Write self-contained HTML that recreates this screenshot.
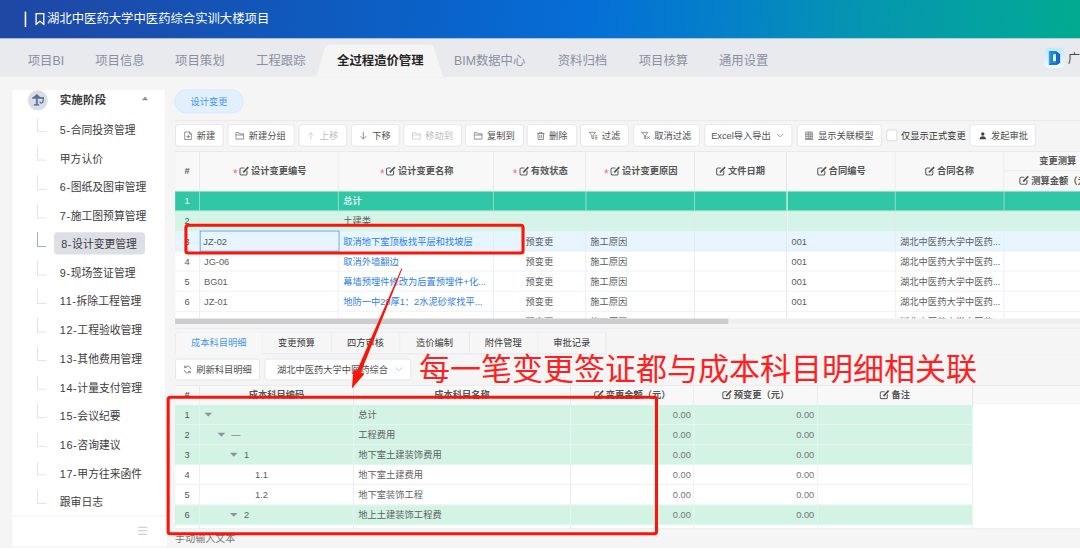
<!DOCTYPE html>
<html lang="zh-CN"><head><meta charset="utf-8"><title>设计变更管理</title>
<style>
*{box-sizing:border-box;margin:0;padding:0}
html,body{width:1080px;height:548px;overflow:hidden;background:#f5f5f5}
body{font-family:"Liberation Sans", "Noto Sans CJK SC", sans-serif;font-size:12px;color:#333;position:relative}
#root{position:absolute;left:0;top:0;width:1400px;height:711px;transform:scale(0.771429);transform-origin:0 0;overflow:hidden;background:#f5f5f5}
.abs{position:absolute}
#hdr{left:0;top:0;width:1400px;height:50.4px;background:linear-gradient(95deg,#1f47a4 0%,#1a4eae 12%,#1157ba 25%,#0a62c8 40%,#056ed7 54%,#0480c9 67%,#0596b0 80%,#03a59b 94%,#02aa90 100%)}
#hdr .bar{left:31.5px;top:15px;width:2.4px;height:20px;background:#fff}
#hdr .ttl{left:61px;top:13px;height:24px;line-height:24px;font-size:16px;color:#fff;white-space:nowrap}
#nav{left:0;top:50px;width:1400px;height:50.2px;background:#e9eaee}
.ni{top:16.5px;height:24px;line-height:24px;font-size:16px;color:#8b90a0;white-space:nowrap}
.ni.on{color:#262626;font-weight:bold}
#side{left:16px;top:117.2px;width:198px;height:551.3px;background:#fff;border-radius:0 0 4px 4px}
#sideb{left:15.6px;top:670.3px;width:200.4px;height:37.9px;background:#fff;border-radius:1px}
.si{left:69.5px;height:28.5px;line-height:28.5px;font-size:14px;color:#3c3c3c;white-space:nowrap;padding:0 8px;border-radius:4px}
.si.on{padding-left:9.8px}
.tl{left:32px;width:12px;border-left:1.3px solid #dcdcdc;border-bottom:1.3px solid #dcdcdc}
.tl.on{border-color:#8a96b3}
.btn{height:29px;line-height:28.2px;border:1px solid #dfe1e5;border-radius:4px;background:#fff;font-size:12px;color:#505050;white-space:nowrap;text-align:center;top:161px}
.btn.dis{color:#bcbcbc}
.btn svg{vertical-align:-2px;margin-right:5px}
.t1h{top:195.5px;height:52px;background:#f8f8f8;border-right:1px solid #dfe2e8;border-bottom:1px solid #e6e6e6;border-top:1px solid #e6e6e6;font-weight:bold;color:#555;text-align:center;line-height:50.6px;white-space:nowrap;overflow:hidden}
.c{height:26px;line-height:27.6px;border-right:1px solid #e2e5ea;border-bottom:1px solid #e6e8ec;white-space:nowrap;overflow:hidden;padding:0 5.5px;color:#5e5e5e}
.c.lnk{color:#2f80e6}
.c.ctr{text-align:center}
.c.num{text-align:right;color:#777;padding-right:3.5px}
.c.idx{text-align:center;padding:0;color:#555}
.req{color:#f56c6c;font-weight:normal;font-size:15.5px;margin:0 1.8px 0 2px;display:inline-block;line-height:12px;vertical-align:-5px;font-family:'Liberation Sans',sans-serif}
.ed{display:inline-block;vertical-align:-2.2px;margin-right:2.5px}
.tab{top:429.5px;height:29.5px;line-height:28px;text-align:center;font-size:12px;color:#383838;border-right:1px solid #e2e6ec;border-top:1px solid #e4e8ee;border-bottom:1px solid #e4e8ee;background:#f6f6f6}
.tab.on{color:#4697ee;background:#f7f7f7;border-left:1px solid #e2e6ec;border-bottom-color:transparent;border-radius:4px 0 0 0}
.t2h{top:499px;height:25.5px;background:#f8f8f8;border-right:1px solid #dfe2e8;border-top:1px solid #e6e6e6;font-weight:bold;color:#555;text-align:center;line-height:25.6px;white-space:nowrap;overflow:hidden}
.tri{display:inline-block;width:0;height:0;border-left:5px solid transparent;border-right:5px solid transparent;border-top:5px solid #8f949c;vertical-align:1.5px}
</style></head><body>
<div id="root">
<div id="hdr" class="abs">
<div class="bar abs"></div>
<svg class="abs" style="left:45px;top:16px" width="14" height="17" viewBox="0 0 14 17"><path d="M1.8 1.6h10v14L6.8 11.6 1.8 15.6z" fill="none" stroke="#fff" stroke-width="1.7" stroke-linejoin="miter"/></svg>
<div class="ttl abs">湖北中医药大学中医药综合实训大楼项目</div>
</div>
<div id="nav" class="abs">
<svg class="abs" style="left:400px;top:0" width="190" height="50" viewBox="0 0 190 50"><path d="M2 50 C8.5 50 10.5 48 12 43 L20.5 14 C22 9.5 24 8 29 8 L155 8 C160 8 162 9.5 163.5 14 L172 43 C173.5 48 175.5 50 181 50 Z" fill="#f5f5f5"/></svg>
<div class="ni abs" style="left:36px">项目BI</div>
<div class="ni abs" style="left:123.5px">项目信息</div>
<div class="ni abs" style="left:227px">项目策划</div>
<div class="ni abs" style="left:332px">工程跟踪</div>
<div class="ni abs on" style="left:437px">全过程造价管理</div>
<div class="ni abs" style="left:588.5px">BIM数据中心</div>
<div class="ni abs" style="left:723px">资料归档</div>
<div class="ni abs" style="left:828px">项目核算</div>
<div class="ni abs" style="left:932px">通用设置</div>
<div class="abs" style="left:1354.2px;top:11.9px;width:25.6px;height:26.2px;border-radius:5.5px;background:linear-gradient(180deg,#bfe7fb 0%,#d6f2fd 45%,#effcff 100%)"></div>
<svg class="abs" style="left:1354.2px;top:11.9px" width="26" height="27" viewBox="0 0 26 27"><path d="M5.7 4 L14.6 4 L20.2 8.2 L20.2 19.2 L15.6 22.4 L5.7 22.4 Z M11 8.3 L14.9 8.3 L14.9 17.4 L11 17.4 Z" fill="#1c84d6" fill-rule="evenodd"/><path d="M14.9 8.3 L14.6 4 L20.2 8.2 L20.2 19.2 L15.6 22.4 L14.9 17.4 Z" fill="#1767bf"/><path d="M5.7 4 L8 5 L8 21 L5.7 22.4 Z" fill="#2f9ce8"/><path d="M5.7 22.4 L8 19.6 L15 19.6 L15.6 22.4 Z" fill="#1a78cc"/></svg>
<div class="abs" style="left:1384px;top:15.3px;height:24px;line-height:24px;font-size:16px;color:#4a4a4a;white-space:nowrap">广联达</div>
</div>
<div id="side" class="abs"></div>
<div id="sideb" class="abs"></div>
<svg class="abs" style="left:178px;top:681px" width="14" height="14" viewBox="0 0 14 14"><path d="M1 2.5h12M1 7h12M1 11.5h12" stroke="#bcc6d8" stroke-width="1.4" fill="none"/></svg>
<div class="abs" style="left:36.1px;top:117.1px;width:25.8px;height:25.8px;border-radius:13px;background:#d9dde8"></div>
<svg class="abs" style="left:36.1px;top:117.1px" width="26" height="26" viewBox="0 0 26 26"><path d="M11.7 5 L16.8 9.4 L6.6 9.4 Z" fill="#5b6d93"/><rect x="5.8" y="9" width="15.2" height="1.9" fill="#4f6187"/><rect x="10.4" y="9.8" width="2.8" height="9" fill="#6c7da1"/><rect x="7.8" y="18.2" width="6.9" height="1.6" fill="#4f6187"/><path d="M19.9 10.6 V13.8 C19.9 17 16.2 17.4 15.6 14.7" stroke="#4f6187" stroke-width="1.5" fill="none"/></svg>
<div class="abs" style="left:77.5px;top:117.5px;height:24px;line-height:24px;font-size:15px;font-weight:bold;color:#3a3a3a;white-space:nowrap">实施阶段</div>
<div class="abs" style="left:183.5px;top:125px;width:0;height:0;border-left:4px solid transparent;border-right:4px solid transparent;border-bottom:5px solid #8a8f98"></div>
<div class="abs" style="left:70px;top:301px;width:117.6px;height:29px;border-radius:5px;background:#dcdfe6"></div>
<div class="si abs" style="top:155.00px"><span style="letter-spacing:.85px">5-</span>合同投资管理</div>
<div class="tl abs" style="left:48px;top:152.90px;height:18.5px"></div>
<div class="si abs" style="top:192.07px">甲方认价</div>
<div class="tl abs" style="left:48px;top:189.97px;height:18.5px"></div>
<div class="si abs" style="top:229.14px"><span style="letter-spacing:.85px">6-</span>图纸及图审管理</div>
<div class="tl abs" style="left:48px;top:227.04px;height:18.5px"></div>
<div class="si abs" style="top:266.21px"><span style="letter-spacing:.85px">7-</span>施工图预算管理</div>
<div class="tl abs" style="left:48px;top:264.11px;height:18.5px"></div>
<div class="si abs on" style="top:303.28px"><span style="letter-spacing:.85px">8-</span>设计变更管理</div>
<div class="tl abs on" style="left:48px;top:301.18px;height:18.5px"></div>
<div class="si abs" style="top:340.35px"><span style="letter-spacing:.85px">9-</span>现场签证管理</div>
<div class="tl abs" style="left:48px;top:338.25px;height:18.5px"></div>
<div class="si abs" style="top:377.42px"><span style="letter-spacing:.85px">11-</span>拆除工程管理</div>
<div class="tl abs" style="left:48px;top:375.32px;height:18.5px"></div>
<div class="si abs" style="top:414.49px"><span style="letter-spacing:.85px">12-</span>工程验收管理</div>
<div class="tl abs" style="left:48px;top:412.39px;height:18.5px"></div>
<div class="si abs" style="top:451.56px"><span style="letter-spacing:.85px">13-</span>其他费用管理</div>
<div class="tl abs" style="left:48px;top:449.46px;height:18.5px"></div>
<div class="si abs" style="top:488.63px"><span style="letter-spacing:.85px">14-</span>计量支付管理</div>
<div class="tl abs" style="left:48px;top:486.53px;height:18.5px"></div>
<div class="si abs" style="top:525.70px"><span style="letter-spacing:.85px">15-</span>会议纪要</div>
<div class="tl abs" style="left:48px;top:523.60px;height:18.5px"></div>
<div class="si abs" style="top:562.77px"><span style="letter-spacing:.85px">16-</span>咨询建议</div>
<div class="tl abs" style="left:48px;top:560.67px;height:18.5px"></div>
<div class="si abs" style="top:599.84px"><span style="letter-spacing:.85px">17-</span>甲方往来函件</div>
<div class="tl abs" style="left:48px;top:597.74px;height:18.5px"></div>
<div class="si abs" style="top:636.91px">跟审日志</div>
<div class="tl abs" style="left:48px;top:634.81px;height:18.5px"></div>
<div class="abs" style="left:226px;top:116px;width:90px;height:30.5px;border-radius:16px;background:#e2effd;border:1px solid #d6e8fc;color:#4596ee;font-size:12px;line-height:31px;text-align:center">设计变更</div>
<div class="abs" style="left:227px;top:155.5px;width:1180px;height:1px;background:#e6e6e6"></div>
<div class="btn abs" style="left:227px;width:63px"><svg width="12" height="12" viewBox="0 0 12 12"><path d="M2 1h5.5L10 3.5V11H2z M7.5 1v2.5H10 M4.3 7h3.4 M6 5.3v3.4" stroke="#7c7c7c" stroke-width="1.1" fill="none" stroke-linecap="round" stroke-linejoin="round"/></svg>新建</div>
<div class="btn abs" style="left:294.5px;width:87px"><svg width="12" height="12" viewBox="0 0 12 12"><path d="M1.2 2h3.6l1 1.5h5v6.8H1.2z M1.2 5h9.6" stroke="#7c7c7c" stroke-width="1.1" fill="none" stroke-linecap="round" stroke-linejoin="round"/></svg>新建分组</div>
<div class="btn abs dis" style="left:386.5px;width:63px"><svg width="12" height="12" viewBox="0 0 12 12"><path d="M6 10.5V1.8 M2.8 5 6 1.8 9.2 5" stroke="#cccccc" stroke-width="1.1" fill="none" stroke-linecap="round" stroke-linejoin="round"/></svg>上移</div>
<div class="btn abs" style="left:454.5px;width:63px"><svg width="12" height="12" viewBox="0 0 12 12"><path d="M6 1.5v8.7 M2.8 7 6 10.2 9.2 7" stroke="#7c7c7c" stroke-width="1.1" fill="none" stroke-linecap="round" stroke-linejoin="round"/></svg>下移</div>
<div class="btn abs dis" style="left:522.5px;width:76.4px"><svg width="12" height="12" viewBox="0 0 12 12"><path d="M1.2 2h3.6l1 1.5h5v6.8H1.2z M1.2 5h9.6" stroke="#cccccc" stroke-width="1.1" fill="none" stroke-linecap="round" stroke-linejoin="round"/></svg>移动到</div>
<div class="btn abs" style="left:602.8px;width:76px"><svg width="12" height="12" viewBox="0 0 12 12"><path d="M1.2 2h3.6l1 1.5h5v6.8H1.2z M1.2 5h9.6" stroke="#7c7c7c" stroke-width="1.1" fill="none" stroke-linecap="round" stroke-linejoin="round"/></svg>复制到</div>
<div class="btn abs" style="left:682.8px;width:64.8px"><svg width="12" height="12" viewBox="0 0 12 12"><path d="M1.5 3h9 M4.3 3V1.5h3.4V3 M2.5 3v7.8h7V3 M4.8 5.2v3.6 M7.2 5.2v3.6" stroke="#7c7c7c" stroke-width="1.1" fill="none" stroke-linecap="round" stroke-linejoin="round"/></svg>删除</div>
<div class="btn abs" style="left:751.8px;width:63.3px"><svg width="12" height="12" viewBox="0 0 12 12"><path d="M1.2 1.5h7.6L6 5.5v4.8L4.2 9V5.5z M8.5 6h2.3 M8.5 8h2.3 M8.5 10h2.3" stroke="#7c7c7c" stroke-width="1.1" fill="none" stroke-linecap="round" stroke-linejoin="round"/></svg>过滤</div>
<div class="btn abs" style="left:820.5px;width:86.4px"><svg width="12" height="12" viewBox="0 0 12 12"><path d="M1.2 1.5h7.6L6 5.5v4.8L4.2 9V5.5z M8 7l3 3 M11 7l-3 3" stroke="#7c7c7c" stroke-width="1.1" fill="none" stroke-linecap="round" stroke-linejoin="round"/></svg>取消过滤</div>
<div class="btn abs" style="left:912.6px;width:114px">Excel导入导出<svg style="margin:0 0 0 7px;vertical-align:-1px" width="11" height="11" viewBox="0 0 11 11"><path d="M1.5 3.5l4 4 4-4" stroke="#888" stroke-width="1.1" fill="none"/></svg></div>
<div class="btn abs" style="left:1032.6px;width:110.5px"><svg width="12" height="12" viewBox="0 0 12 12"><path d="M2 1h8v8.5H2z M2 3.8h8 M2 6.6h8 M4.7 1v8.5 M7.4 1v8.5 M1 11h10" stroke="#7c7c7c" stroke-width="1.1" fill="none" stroke-linecap="round" stroke-linejoin="round"/></svg>显示关联模型</div>
<div class="abs" style="left:1148.5px;top:168.3px;width:14.5px;height:14.5px;border:1px solid #d4d4d4;border-radius:2.5px;background:#fff"></div>
<div class="abs" style="left:1168px;top:161.5px;height:28.5px;line-height:28.5px;font-size:12px;color:#333;white-space:nowrap">仅显示正式变更</div>
<div class="btn abs" style="left:1257.2px;width:86px"><svg width="12" height="12" viewBox="0 0 12 12"><path d="M6 1.5a2.2 2.2 0 1 1 0 4.4 2.2 2.2 0 0 1 0-4.4z M1.8 10.5c0-2.6 1.8-3.8 4.2-3.8s4.2 1.2 4.2 3.8z" fill="#444"/></svg>发起审批</div>
<div class="abs" style="left:227px;top:195.5px;width:1px;height:218px;background:#dfe2e8"></div>
<div class="t1h abs" style="left:227px;width:32px">#</div>
<div class="t1h abs" style="left:259px;width:180.3px"><span class="req">*</span><svg class="ed" width="13" height="13" viewBox="0 0 13 13"><path d="M10.2 6.8v3.2a1.8 1.8 0 0 1-1.8 1.8H2.8A1.8 1.8 0 0 1 1 10V4.6a1.8 1.8 0 0 1 1.8-1.8h3.4" stroke="#636363" stroke-width="1.5" fill="none" stroke-linecap="round"/><path d="M5.3 8.4L11.9 1.5" stroke="#555" stroke-width="2.3" fill="none" stroke-linecap="butt"/></svg>设计变更编号</div>
<div class="t1h abs" style="left:439.3px;width:200.7px"><span class="req">*</span><svg class="ed" width="13" height="13" viewBox="0 0 13 13"><path d="M10.2 6.8v3.2a1.8 1.8 0 0 1-1.8 1.8H2.8A1.8 1.8 0 0 1 1 10V4.6a1.8 1.8 0 0 1 1.8-1.8h3.4" stroke="#636363" stroke-width="1.5" fill="none" stroke-linecap="round"/><path d="M5.3 8.4L11.9 1.5" stroke="#555" stroke-width="2.3" fill="none" stroke-linecap="butt"/></svg>设计变更名称</div>
<div class="t1h abs" style="left:640px;width:119.7px"><span class="req">*</span><svg class="ed" width="13" height="13" viewBox="0 0 13 13"><path d="M10.2 6.8v3.2a1.8 1.8 0 0 1-1.8 1.8H2.8A1.8 1.8 0 0 1 1 10V4.6a1.8 1.8 0 0 1 1.8-1.8h3.4" stroke="#636363" stroke-width="1.5" fill="none" stroke-linecap="round"/><path d="M5.3 8.4L11.9 1.5" stroke="#555" stroke-width="2.3" fill="none" stroke-linecap="butt"/></svg>有效状态</div>
<div class="t1h abs" style="left:759.7px;width:140.9px"><span class="req">*</span><svg class="ed" width="13" height="13" viewBox="0 0 13 13"><path d="M10.2 6.8v3.2a1.8 1.8 0 0 1-1.8 1.8H2.8A1.8 1.8 0 0 1 1 10V4.6a1.8 1.8 0 0 1 1.8-1.8h3.4" stroke="#636363" stroke-width="1.5" fill="none" stroke-linecap="round"/><path d="M5.3 8.4L11.9 1.5" stroke="#555" stroke-width="2.3" fill="none" stroke-linecap="butt"/></svg>设计变更原因</div>
<div class="t1h abs" style="left:900.6px;width:119.9px"><svg class="ed" width="13" height="13" viewBox="0 0 13 13"><path d="M10.2 6.8v3.2a1.8 1.8 0 0 1-1.8 1.8H2.8A1.8 1.8 0 0 1 1 10V4.6a1.8 1.8 0 0 1 1.8-1.8h3.4" stroke="#636363" stroke-width="1.5" fill="none" stroke-linecap="round"/><path d="M5.3 8.4L11.9 1.5" stroke="#555" stroke-width="2.3" fill="none" stroke-linecap="butt"/></svg>文件日期</div>
<div class="t1h abs" style="left:1020.5px;width:140.8px"><svg class="ed" width="13" height="13" viewBox="0 0 13 13"><path d="M10.2 6.8v3.2a1.8 1.8 0 0 1-1.8 1.8H2.8A1.8 1.8 0 0 1 1 10V4.6a1.8 1.8 0 0 1 1.8-1.8h3.4" stroke="#636363" stroke-width="1.5" fill="none" stroke-linecap="round"/><path d="M5.3 8.4L11.9 1.5" stroke="#555" stroke-width="2.3" fill="none" stroke-linecap="butt"/></svg>合同编号</div>
<div class="t1h abs" style="left:1161.3px;width:140.4px"><svg class="ed" width="13" height="13" viewBox="0 0 13 13"><path d="M10.2 6.8v3.2a1.8 1.8 0 0 1-1.8 1.8H2.8A1.8 1.8 0 0 1 1 10V4.6a1.8 1.8 0 0 1 1.8-1.8h3.4" stroke="#636363" stroke-width="1.5" fill="none" stroke-linecap="round"/><path d="M5.3 8.4L11.9 1.5" stroke="#555" stroke-width="2.3" fill="none" stroke-linecap="butt"/></svg>合同名称</div>
<div class="t1h abs" style="left:1301.7px;width:140px;height:26px;line-height:25.5px">变更测算</div>
<div class="t1h abs" style="left:1301.7px;top:221.5px;width:140px;height:26px;line-height:25.5px;border-top:none"><svg class="ed" width="13" height="13" viewBox="0 0 13 13"><path d="M10.2 6.8v3.2a1.8 1.8 0 0 1-1.8 1.8H2.8A1.8 1.8 0 0 1 1 10V4.6a1.8 1.8 0 0 1 1.8-1.8h3.4" stroke="#636363" stroke-width="1.5" fill="none" stroke-linecap="round"/><path d="M5.3 8.4L11.9 1.5" stroke="#555" stroke-width="2.3" fill="none" stroke-linecap="butt"/></svg>测算金额（元）</div>
<div class="abs" style="left:227px;top:247.5px;width:1180px;height:165.5px;overflow:hidden">
<div class="c abs idx" style="left:0.00px;top:0px;width:32px;background:#2fc7a5;color:#fff;font-weight:500;border-color:rgba(255,255,255,.55) rgba(255,255,255,.55) #d4f3e6;">1</div>
<div class="c abs" style="left:32.00px;top:0px;width:180.3px;background:#2fc7a5;color:#fff;font-weight:500;border-color:rgba(255,255,255,.55) rgba(255,255,255,.55) #d4f3e6;"></div>
<div class="c abs" style="left:212.30px;top:0px;width:200.7px;background:#2fc7a5;color:#fff;font-weight:500;border-color:rgba(255,255,255,.55) rgba(255,255,255,.55) #d4f3e6;">总计</div>
<div class="c abs ctr" style="left:413.00px;top:0px;width:119.7px;background:#2fc7a5;color:#fff;font-weight:500;border-color:rgba(255,255,255,.55) rgba(255,255,255,.55) #d4f3e6;"></div>
<div class="c abs" style="left:532.70px;top:0px;width:140.9px;background:#2fc7a5;color:#fff;font-weight:500;border-color:rgba(255,255,255,.55) rgba(255,255,255,.55) #d4f3e6;"></div>
<div class="c abs" style="left:673.60px;top:0px;width:119.9px;background:#2fc7a5;color:#fff;font-weight:500;border-color:rgba(255,255,255,.55) rgba(255,255,255,.55) #d4f3e6;"></div>
<div class="c abs" style="left:793.50px;top:0px;width:140.8px;background:#2fc7a5;color:#fff;font-weight:500;border-color:rgba(255,255,255,.55) rgba(255,255,255,.55) #d4f3e6;"></div>
<div class="c abs" style="left:934.30px;top:0px;width:140.4px;background:#2fc7a5;color:#fff;font-weight:500;border-color:rgba(255,255,255,.55) rgba(255,255,255,.55) #d4f3e6;"></div>
<div class="c abs" style="left:1074.70px;top:0px;width:140px;background:#2fc7a5;color:#fff;font-weight:500;border-color:rgba(255,255,255,.55) rgba(255,255,255,.55) #d4f3e6;"></div>
<div class="c abs idx" style="left:0.00px;top:26px;width:32px;background:#d4f4e7;border-bottom-color:#d4f3e6;">2</div>
<div class="c abs" style="left:32.00px;top:26px;width:180.3px;background:#d4f4e7;border-bottom-color:#d4f3e6;"></div>
<div class="c abs" style="left:212.30px;top:26px;width:200.7px;background:#d4f4e7;border-bottom-color:#d4f3e6;">土建类</div>
<div class="c abs ctr" style="left:413.00px;top:26px;width:119.7px;background:#d4f4e7;border-bottom-color:#d4f3e6;"></div>
<div class="c abs" style="left:532.70px;top:26px;width:140.9px;background:#d4f4e7;border-bottom-color:#d4f3e6;"></div>
<div class="c abs" style="left:673.60px;top:26px;width:119.9px;background:#d4f4e7;border-bottom-color:#d4f3e6;"></div>
<div class="c abs" style="left:793.50px;top:26px;width:140.8px;background:#d4f4e7;border-bottom-color:#d4f3e6;"></div>
<div class="c abs" style="left:934.30px;top:26px;width:140.4px;background:#d4f4e7;border-bottom-color:#d4f3e6;"></div>
<div class="c abs" style="left:1074.70px;top:26px;width:140px;background:#d4f4e7;border-bottom-color:#d4f3e6;"></div>
<div class="c abs idx" style="left:0.00px;top:52px;width:32px;background:#e6f5ff;">3</div>
<div class="c abs" style="left:32.00px;top:52px;width:180.3px;background:#e6f5ff;">JZ-02</div>
<div class="c abs lnk" style="left:212.30px;top:52px;width:200.7px;background:#e6f5ff;">取消地下室顶板找平层和找坡层</div>
<div class="c abs ctr" style="left:413.00px;top:52px;width:119.7px;background:#e6f5ff;">预变更</div>
<div class="c abs" style="left:532.70px;top:52px;width:140.9px;background:#e6f5ff;">施工原因</div>
<div class="c abs" style="left:673.60px;top:52px;width:119.9px;background:#e6f5ff;"></div>
<div class="c abs" style="left:793.50px;top:52px;width:140.8px;background:#e6f5ff;">001</div>
<div class="c abs" style="left:934.30px;top:52px;width:140.4px;background:#e6f5ff;">湖北中医药大学中医药...</div>
<div class="c abs" style="left:1074.70px;top:52px;width:140px;background:#e6f5ff;"></div>
<div class="c abs idx" style="left:0.00px;top:78px;width:32px;background:#fff;">4</div>
<div class="c abs" style="left:32.00px;top:78px;width:180.3px;background:#fff;">JG-06</div>
<div class="c abs lnk" style="left:212.30px;top:78px;width:200.7px;background:#fff;">取消外墙翻边</div>
<div class="c abs ctr" style="left:413.00px;top:78px;width:119.7px;background:#fff;">预变更</div>
<div class="c abs" style="left:532.70px;top:78px;width:140.9px;background:#fff;">施工原因</div>
<div class="c abs" style="left:673.60px;top:78px;width:119.9px;background:#fff;"></div>
<div class="c abs" style="left:793.50px;top:78px;width:140.8px;background:#fff;">001</div>
<div class="c abs" style="left:934.30px;top:78px;width:140.4px;background:#fff;">湖北中医药大学中医药...</div>
<div class="c abs" style="left:1074.70px;top:78px;width:140px;background:#fff;"></div>
<div class="c abs idx" style="left:0.00px;top:104px;width:32px;background:#fff;">5</div>
<div class="c abs" style="left:32.00px;top:104px;width:180.3px;background:#fff;">BG01</div>
<div class="c abs lnk" style="left:212.30px;top:104px;width:200.7px;background:#fff;">幕墙预埋件修改为后置预埋件+化...</div>
<div class="c abs ctr" style="left:413.00px;top:104px;width:119.7px;background:#fff;">预变更</div>
<div class="c abs" style="left:532.70px;top:104px;width:140.9px;background:#fff;">施工原因</div>
<div class="c abs" style="left:673.60px;top:104px;width:119.9px;background:#fff;"></div>
<div class="c abs" style="left:793.50px;top:104px;width:140.8px;background:#fff;">001</div>
<div class="c abs" style="left:934.30px;top:104px;width:140.4px;background:#fff;">湖北中医药大学中医药...</div>
<div class="c abs" style="left:1074.70px;top:104px;width:140px;background:#fff;"></div>
<div class="c abs idx" style="left:0.00px;top:130px;width:32px;background:#fff;">6</div>
<div class="c abs" style="left:32.00px;top:130px;width:180.3px;background:#fff;">JZ-01</div>
<div class="c abs lnk" style="left:212.30px;top:130px;width:200.7px;background:#fff;">地防一中20厚1：2水泥砂浆找平...</div>
<div class="c abs ctr" style="left:413.00px;top:130px;width:119.7px;background:#fff;">预变更</div>
<div class="c abs" style="left:532.70px;top:130px;width:140.9px;background:#fff;">施工原因</div>
<div class="c abs" style="left:673.60px;top:130px;width:119.9px;background:#fff;"></div>
<div class="c abs" style="left:793.50px;top:130px;width:140.8px;background:#fff;">001</div>
<div class="c abs" style="left:934.30px;top:130px;width:140.4px;background:#fff;">湖北中医药大学中医药...</div>
<div class="c abs" style="left:1074.70px;top:130px;width:140px;background:#fff;"></div>
<div class="c abs idx" style="left:0.00px;top:156px;width:32px;background:#fff;">7</div>
<div class="c abs" style="left:32.00px;top:156px;width:180.3px;background:#fff;"></div>
<div class="c abs lnk" style="left:212.30px;top:156px;width:200.7px;background:#fff;"></div>
<div class="c abs ctr" style="left:413.00px;top:156px;width:119.7px;background:#fff;">预变更</div>
<div class="c abs" style="left:532.70px;top:156px;width:140.9px;background:#fff;">施工原因</div>
<div class="c abs" style="left:673.60px;top:156px;width:119.9px;background:#fff;"></div>
<div class="c abs" style="left:793.50px;top:156px;width:140.8px;background:#fff;">001</div>
<div class="c abs" style="left:934.30px;top:156px;width:140.4px;background:#fff;">湖北中医药大学中医药...</div>
<div class="c abs" style="left:1074.70px;top:156px;width:140px;background:#fff;"></div>
</div>
<div class="abs" style="left:259px;top:298.5px;width:181px;height:27.5px;border:1.5px solid #3f9af5;background:#e6f5ff;line-height:26.5px;padding-left:3.5px;color:#555">JZ-02</div>
<div class="abs" style="left:227px;top:413px;width:1180px;height:6.7px;background:#f0f0f0"></div>
<div class="abs" style="left:227px;top:413px;width:717px;height:6.7px;background:#cccccc"></div>
<div class="abs" style="left:227px;top:425px;width:1180px;height:1px;background:#e3e7ee"></div>
<div class="tab abs on" style="left:227px;width:113px">成本科目明细</div>
<div class="tab abs" style="left:340px;width:89.5px">变更预算</div>
<div class="tab abs" style="left:429.5px;width:89.5px">四方审核</div>
<div class="tab abs" style="left:519px;width:89.5px">造价编制</div>
<div class="tab abs" style="left:608.5px;width:89px">附件管理</div>
<div class="tab abs" style="left:697.5px;width:88.5px">审批记录</div>
<div class="abs" style="left:340px;top:458.5px;width:1067px;height:1px;background:#f1f1f1"></div>
<div class="btn abs" style="left:227px;top:465px;width:110px;height:28px;line-height:26px"><svg width="12" height="12" viewBox="0 0 12 12"><path d="M10.2 5A4.3 4.3 0 0 0 2.6 3.2 M1.8 7a4.3 4.3 0 0 0 7.6 1.8 M2.4 1.4v2h2 M9.6 10.6v-2h-2" stroke="#777" stroke-width="1.1" fill="none" stroke-linecap="round" stroke-linejoin="round"/></svg>刷新科目明细</div>
<div class="btn abs" style="left:343px;top:465px;width:190px;height:28px;line-height:26px;text-align:left;padding-left:15px">湖北中医药大学中医药综合<svg style="margin:0 0 0 8px;vertical-align:-1px" width="12" height="11" viewBox="0 0 12 11"><path d="M1.5 3.2l4.5 4.5 4.5-4.5" stroke="#c2c2c2" stroke-width="1.1" fill="none"/></svg></div>
<div class="abs" style="left:227px;top:499px;width:1180px;height:25.5px;background:#f8f8f8;border-top:1px solid #e6e6e6"></div>
<div class="abs" style="left:227px;top:524.5px;width:1180px;height:160.5px;background:#fff"></div>
<div class="abs" style="left:227px;top:499px;width:1px;height:186px;background:#dfe2e8"></div>
<div class="t2h abs" style="left:227px;width:32px">#</div>
<div class="t2h abs" style="left:259px;width:200px">成本科目编码</div>
<div class="t2h abs" style="left:459px;width:281px">成本科目名称</div>
<div class="t2h abs" style="left:740px;width:160px"><svg class="ed" width="13" height="13" viewBox="0 0 13 13"><path d="M10.2 6.8v3.2a1.8 1.8 0 0 1-1.8 1.8H2.8A1.8 1.8 0 0 1 1 10V4.6a1.8 1.8 0 0 1 1.8-1.8h3.4" stroke="#636363" stroke-width="1.5" fill="none" stroke-linecap="round"/><path d="M5.3 8.4L11.9 1.5" stroke="#555" stroke-width="2.3" fill="none" stroke-linecap="butt"/></svg>变更金额（元）</div>
<div class="t2h abs" style="left:900px;width:160px"><svg class="ed" width="13" height="13" viewBox="0 0 13 13"><path d="M10.2 6.8v3.2a1.8 1.8 0 0 1-1.8 1.8H2.8A1.8 1.8 0 0 1 1 10V4.6a1.8 1.8 0 0 1 1.8-1.8h3.4" stroke="#636363" stroke-width="1.5" fill="none" stroke-linecap="round"/><path d="M5.3 8.4L11.9 1.5" stroke="#555" stroke-width="2.3" fill="none" stroke-linecap="butt"/></svg>预变更（元）</div>
<div class="t2h abs" style="left:1060px;width:201px"><svg class="ed" width="13" height="13" viewBox="0 0 13 13"><path d="M10.2 6.8v3.2a1.8 1.8 0 0 1-1.8 1.8H2.8A1.8 1.8 0 0 1 1 10V4.6a1.8 1.8 0 0 1 1.8-1.8h3.4" stroke="#636363" stroke-width="1.5" fill="none" stroke-linecap="round"/><path d="M5.3 8.4L11.9 1.5" stroke="#555" stroke-width="2.3" fill="none" stroke-linecap="butt"/></svg>备注</div>
<div class="abs" style="left:227px;top:524.5px;width:1034px;height:160.5px;overflow:hidden">
<div class="c abs idx" style="left:0px;top:0px;width:32px;background:#d3f3e5;border-color:#e9f8f1;">1</div>
<div class="c abs" style="left:32px;top:0px;width:200px;background:#d3f3e5;border-color:#e9f8f1;padding:0;"><span style="display:inline-block;width:3.3px"></span><span style="display:inline-block;width:16px;text-align:center"><i class=tri></i></span><span style="margin-left:5px"></span></div>
<div class="c abs" style="left:232px;top:0px;width:281px;background:#d3f3e5;border-color:#e9f8f1;">总计</div>
<div class="c abs num" style="left:513px;top:0px;width:160px;background:#d3f3e5;border-color:#e9f8f1;">0.00</div>
<div class="c abs num" style="left:673px;top:0px;width:160px;background:#d3f3e5;border-color:#e9f8f1;">0.00</div>
<div class="c abs" style="left:833px;top:0px;width:201px;background:#d3f3e5;border-color:#e9f8f1;"></div>
<div class="c abs idx" style="left:0px;top:26px;width:32px;background:#d3f3e5;border-color:#e9f8f1;">2</div>
<div class="c abs" style="left:32px;top:26px;width:200px;background:#d3f3e5;border-color:#e9f8f1;padding:0;"><span style="display:inline-block;width:19.8px"></span><span style="display:inline-block;width:16px;text-align:center"><i class=tri></i></span><span style="margin-left:5px">—</span></div>
<div class="c abs" style="left:232px;top:26px;width:281px;background:#d3f3e5;border-color:#e9f8f1;">工程费用</div>
<div class="c abs num" style="left:513px;top:26px;width:160px;background:#d3f3e5;border-color:#e9f8f1;">0.00</div>
<div class="c abs num" style="left:673px;top:26px;width:160px;background:#d3f3e5;border-color:#e9f8f1;">0.00</div>
<div class="c abs" style="left:833px;top:26px;width:201px;background:#d3f3e5;border-color:#e9f8f1;"></div>
<div class="c abs idx" style="left:0px;top:52px;width:32px;background:#d3f3e5;border-color:#e9f8f1;">3</div>
<div class="c abs" style="left:32px;top:52px;width:200px;background:#d3f3e5;border-color:#e9f8f1;padding:0;"><span style="display:inline-block;width:36.3px"></span><span style="display:inline-block;width:16px;text-align:center"><i class=tri></i></span><span style="margin-left:5px">1</span></div>
<div class="c abs" style="left:232px;top:52px;width:281px;background:#d3f3e5;border-color:#e9f8f1;">地下室土建装饰费用</div>
<div class="c abs num" style="left:513px;top:52px;width:160px;background:#d3f3e5;border-color:#e9f8f1;">0.00</div>
<div class="c abs num" style="left:673px;top:52px;width:160px;background:#d3f3e5;border-color:#e9f8f1;">0.00</div>
<div class="c abs" style="left:833px;top:52px;width:201px;background:#d3f3e5;border-color:#e9f8f1;"></div>
<div class="c abs idx" style="left:0px;top:78px;width:32px;background:#fff;">4</div>
<div class="c abs" style="left:32px;top:78px;width:200px;background:#fff;padding:0;"><span style="display:inline-block;width:52.8px"></span><span style="display:inline-block;width:16px;text-align:center"></span><span style="margin-left:2.8px">1.1</span></div>
<div class="c abs" style="left:232px;top:78px;width:281px;background:#fff;">地下室土建费用</div>
<div class="c abs num" style="left:513px;top:78px;width:160px;background:#fff;">0.00</div>
<div class="c abs num" style="left:673px;top:78px;width:160px;background:#fff;">0.00</div>
<div class="c abs" style="left:833px;top:78px;width:201px;background:#fff;"></div>
<div class="c abs idx" style="left:0px;top:104px;width:32px;background:#fff;">5</div>
<div class="c abs" style="left:32px;top:104px;width:200px;background:#fff;padding:0;"><span style="display:inline-block;width:52.8px"></span><span style="display:inline-block;width:16px;text-align:center"></span><span style="margin-left:2.8px">1.2</span></div>
<div class="c abs" style="left:232px;top:104px;width:281px;background:#fff;">地下室装饰工程</div>
<div class="c abs num" style="left:513px;top:104px;width:160px;background:#fff;">0.00</div>
<div class="c abs num" style="left:673px;top:104px;width:160px;background:#fff;">0.00</div>
<div class="c abs" style="left:833px;top:104px;width:201px;background:#fff;"></div>
<div class="c abs idx" style="left:0px;top:130px;width:32px;background:#d3f3e5;border-color:#e9f8f1;">6</div>
<div class="c abs" style="left:32px;top:130px;width:200px;background:#d3f3e5;border-color:#e9f8f1;padding:0;"><span style="display:inline-block;width:36.3px"></span><span style="display:inline-block;width:16px;text-align:center"><i class=tri></i></span><span style="margin-left:5px">2</span></div>
<div class="c abs" style="left:232px;top:130px;width:281px;background:#d3f3e5;border-color:#e9f8f1;">地上土建装饰工程费</div>
<div class="c abs num" style="left:513px;top:130px;width:160px;background:#d3f3e5;border-color:#e9f8f1;">0.00</div>
<div class="c abs num" style="left:673px;top:130px;width:160px;background:#d3f3e5;border-color:#e9f8f1;">0.00</div>
<div class="c abs" style="left:833px;top:130px;width:201px;background:#d3f3e5;border-color:#e9f8f1;"></div>
<div class="c abs idx" style="left:0px;top:156px;width:32px;background:#fff;">7</div>
<div class="c abs" style="left:32px;top:156px;width:200px;background:#fff;padding:0;"><span style="display:inline-block;width:52.8px"></span><span style="display:inline-block;width:16px;text-align:center"></span><span style="margin-left:2.8px">2.1</span></div>
<div class="c abs" style="left:232px;top:156px;width:281px;background:#fff;">地上土建费用</div>
<div class="c abs num" style="left:513px;top:156px;width:160px;background:#fff;">0.00</div>
<div class="c abs num" style="left:673px;top:156px;width:160px;background:#fff;">0.00</div>
<div class="c abs" style="left:833px;top:156px;width:201px;background:#fff;"></div>
</div>
<div class="abs" style="left:227px;top:684.6px;width:1180px;height:1px;background:#e3e6eb"></div>
<div class="abs" style="left:227px;top:690px;height:18px;line-height:18px;font-size:13px;color:#757575;white-space:nowrap">手动输入文本</div>
<div class="abs" style="left:543px;top:452px;height:56px;line-height:56px;font-size:40.2px;color:#ff1f1f;white-space:nowrap;font-family:'Liberation Sans','Noto Sans CJK SC',sans-serif">每一笔变更签证都与成本科目明细相关联</div>
<div class="abs" style="left:239.4px;top:290.1px;width:440.7px;height:40.4px;border:4.5px solid #fb1508;border-radius:5px"></div>
<div class="abs" style="left:215.6px;top:513.1px;width:637.8px;height:181.0px;border:4.5px solid #fb1508;border-radius:5px"></div>
<svg class="abs" style="left:0;top:0" width="1400" height="711" viewBox="0 0 1400 711"><polygon points="520.3,347.9 462.5,480.8 458.0,479.0 456.2,503.5 472.3,484.9 467.8,483.0 521.5,348.4" fill="#fb1508"/></svg>
</div></body></html>
